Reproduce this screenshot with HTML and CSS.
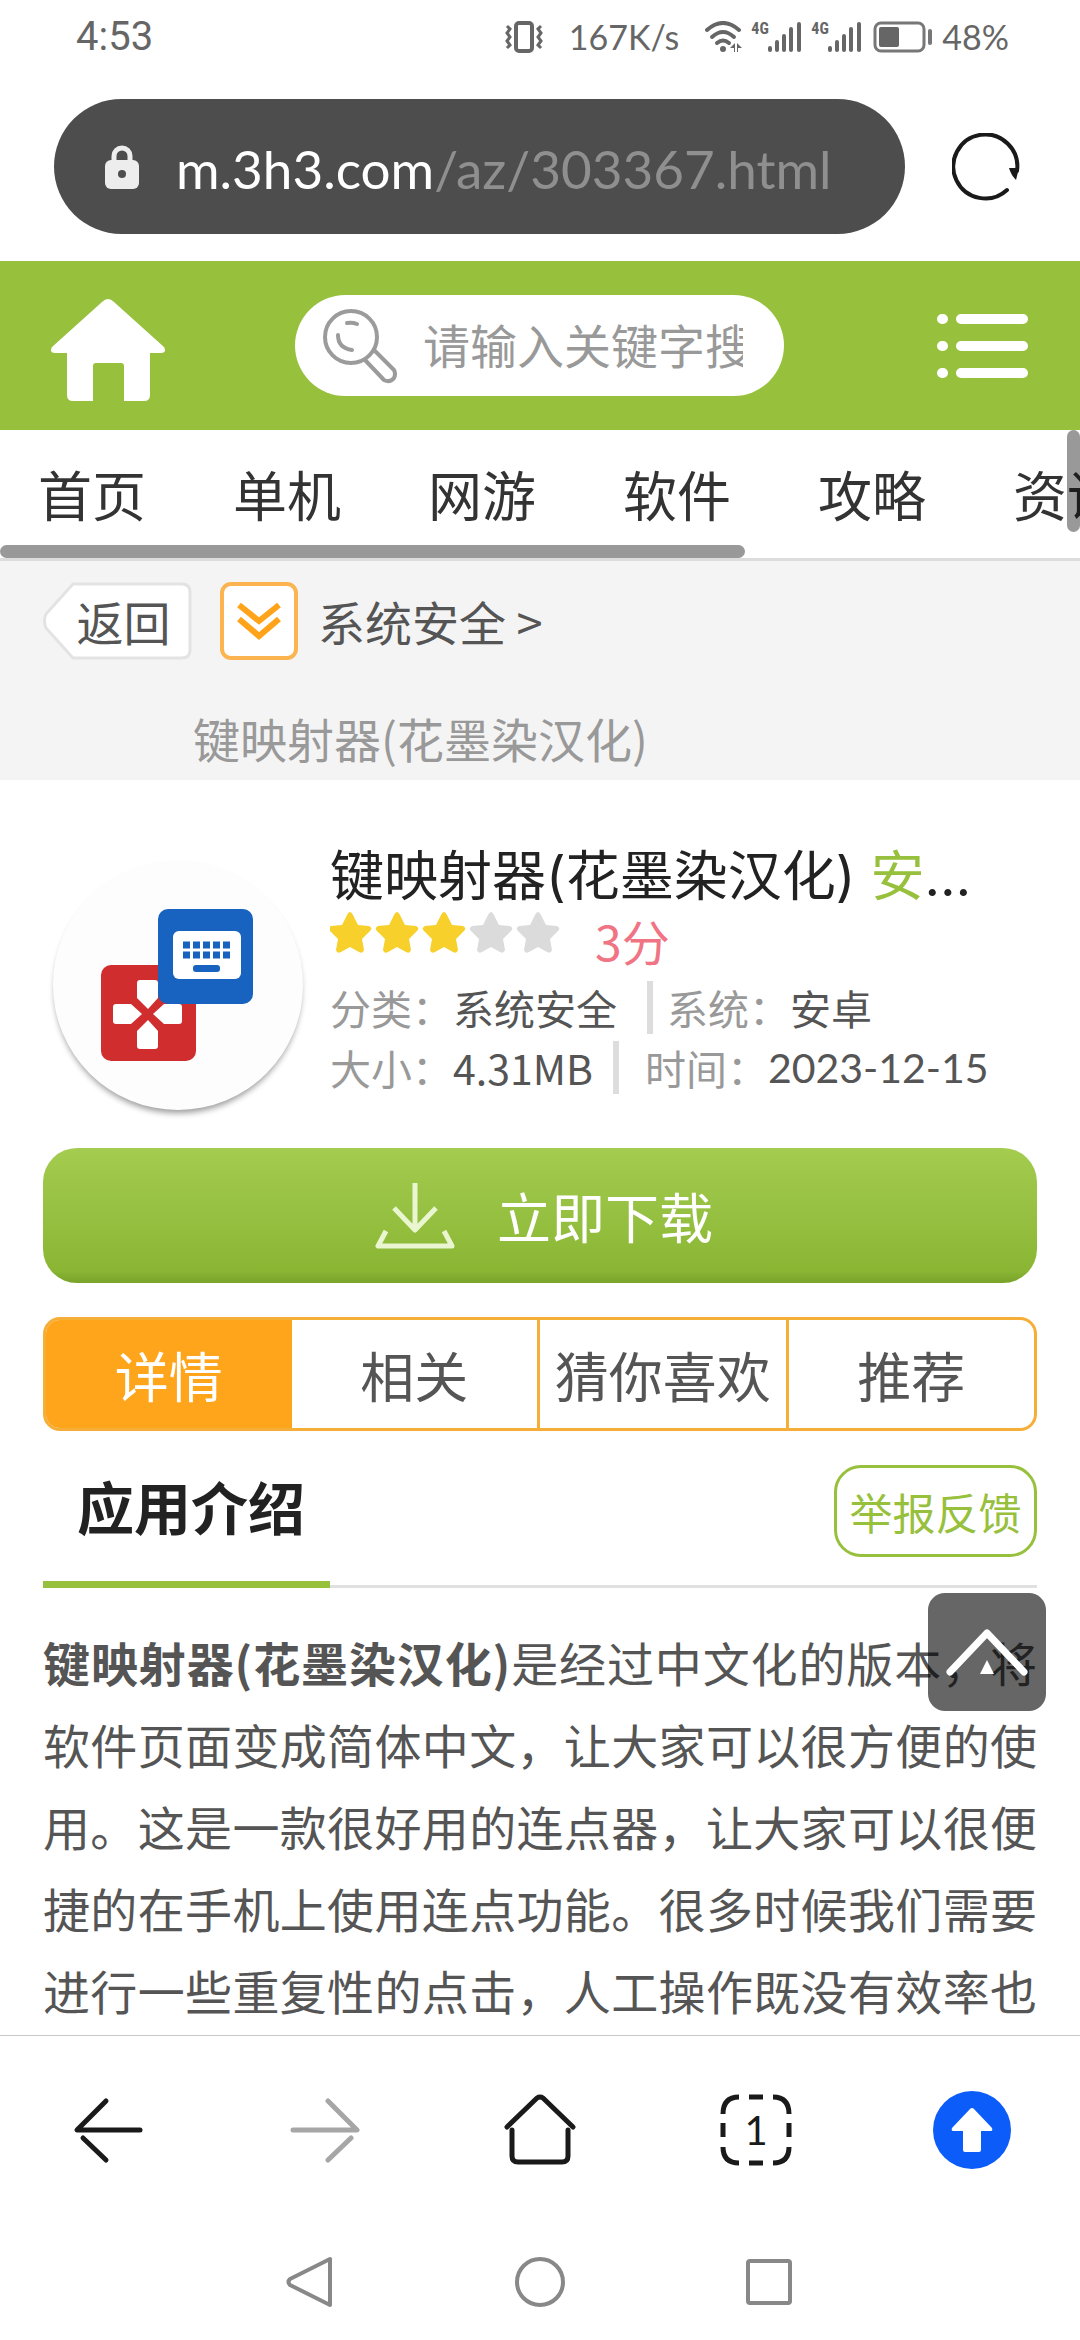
FILE: index.html
```html
<!DOCTYPE html>
<html lang="zh-CN">
<head>
<meta charset="utf-8">
<meta name="viewport" content="width=device-width, initial-scale=1">
<title>键映射器(花墨染汉化)</title>
<link rel="stylesheet" href="styles.css">
</head>
<body>
<div class="status">
  <time class="status-time">4:53</time>
  <div class="status-right">
    <svg class="vibrate" width="38" height="32" viewBox="0 0 38 32" fill="none" stroke="#666" stroke-width="4">
      <rect x="11" y="2" width="16" height="28" rx="3"/>
      <path d="M2 5l3 3-3 4 3 4-3 4 3 4-3 3M36 5l-3 3 3 4-3 4 3 4-3 4 3 3" stroke-width="3"/>
    </svg>
    <span class="speed">167K/s</span>
    <svg class="wifi" width="38" height="32" viewBox="0 0 38 32">
      <g fill="none" stroke="#666" stroke-width="4" stroke-linecap="round">
        <path d="M2 9Q18-5 34 9"/><path d="M7 16Q18 6 29 16"/><path d="M12 22Q18 17 24 22"/>
      </g>
      <circle cx="18" cy="28" r="3" fill="#666"/>
      <path d="M25 27l5-5v9h-1v-4zM32 22l5 5h-4v4h-1z" fill="#666"/>
    </svg>
    <div class="cell">
      <span class="cell-type">4G</span>
      <svg width="33" height="32" viewBox="0 0 33 32" stroke="#666" stroke-width="4" stroke-linecap="round"><path d="M2 27v2M9 21v8M16 15v14M23 8v21M31 3v26"/></svg>
    </div>
    <div class="cell">
      <span class="cell-type">4G</span>
      <svg width="33" height="32" viewBox="0 0 33 32" stroke="#666" stroke-width="4" stroke-linecap="round"><path d="M2 27v2M9 21v8M16 15v14M23 8v21M31 3v26"/></svg>
    </div>
    <svg class="battery" width="60" height="32" viewBox="0 0 60 32">
      <rect x="2" y="2" width="49" height="28" rx="6" fill="none" stroke="#777" stroke-width="3"/>
      <rect x="6" y="6" width="20" height="20" rx="2" fill="#666"/>
      <rect x="55" y="8" width="4" height="16" rx="2" fill="#777"/>
    </svg>
    <span class="percent">48%</span>
  </div>
</div>

<div class="toolbar">
  <button class="address" type="button">
    <svg width="34" height="44" viewBox="0 0 34 44">
      <rect y="15" width="34" height="29" rx="6" fill="#ededed"/>
      <path d="M9 16v-5a8 8 0 0 1 16 0v5" fill="none" stroke="#ededed" stroke-width="5"/>
      <circle cx="17" cy="29" r="4" fill="#4d4d4d"/>
    </svg>
    <span class="url">m.3h3.com<span class="url-path">/az/303367.html</span></span>
  </button>
  <button class="icon-button" type="button" aria-label="刷新">
    <svg width="68" height="68" viewBox="0 0 68 68">
      <path d="M55 57A32 32 0 1 1 65 38" fill="none" stroke="#1a1a1a" stroke-width="4" stroke-linecap="round"/>
      <path d="M57 35h10l-3 12q-5-5-7-12z" fill="#1a1a1a"/>
    </svg>
  </button>
</div>

<header class="site-header">
  <a class="site-home" href="#" aria-label="首页">
    <svg width="114" height="102" viewBox="0 0 114 102">
      <path d="M57 0q3 0 6 3l50 45q3 6-3 6H99v42q0 6-6 6H73V67q0-3-3-3H45q-3 0-3 3v35H22q-6 0-6-6V54H4q-6 0-3-6L51 3q3-3 6-3z" fill="#fff"/>
    </svg>
  </a>
  <form class="search">
    <svg width="74" height="76" viewBox="0 0 74 76" fill="none" stroke="#9b9b9b" stroke-width="4" stroke-linecap="round">
      <circle cx="28" cy="29" r="26"/>
      <path d="M24 15q5-1 10 1M15 27q0 13 14 15"/>
      <path d="M42 52l19 20q6 3 10-2 2-4 0-8L51 42"/>
    </svg>
    <input class="search-input" type="text" placeholder="请输入关键字搜索" aria-label="搜索">
  </form>
  <button class="icon-button" type="button" aria-label="菜单">
    <svg width="92" height="66" viewBox="0 0 92 66" stroke="#fff" stroke-width="10" stroke-linecap="round"><path d="M5 6h1M24 6h62M5 33h1M24 33h62M5 60h1M24 60h62"/></svg>
  </button>
</header>

<nav class="channels">
  <div class="channels-list">
    <a href="#">首页</a><a href="#">单机</a><a href="#">网游</a><a href="#">软件</a><a href="#">攻略</a><a href="#">资讯</a>
  </div>
  <div class="channels-bar"></div>
  <div class="page-scroll"></div>
</nav>

<main class="page">
  <div class="crumbs">
    <div class="crumbs-row">
      <a class="back" href="#">
        <svg class="back-shape" width="149" height="78" viewBox="0 0 149 78"><path d="M30 2h109q8 0 8 8v58q0 8-8 8H30L3 46q-3-7 0-14z" fill="#fff" stroke="#e3e3e3" stroke-width="3"/></svg>
        <span class="back-text">返回</span>
      </a>
      <button class="icon-button" type="button" aria-label="展开">
        <svg width="78" height="78" viewBox="0 0 78 78" fill="none">
          <rect x="2" y="2" width="74" height="74" rx="9" fill="#fff" stroke="#fbb450" stroke-width="4"/>
          <path d="M19 23l20 16 20-16M19 37l20 17 20-17" stroke="#ffa31a" stroke-width="6"/>
        </svg>
      </button>
      <a class="crumb-link" href="#">系统安全 &gt;</a>
    </div>
    <p class="crumb-current">键映射器(花墨染汉化)</p>
  </div>

  <section class="app">
    <svg class="app-icon" width="270" height="282" viewBox="0 0 270 282">
      <defs><filter id="shade" x="-10%" y="-10%" width="120%" height="120%"><feGaussianBlur stdDeviation="3"/></filter></defs>
      <circle cx="135" cy="148" r="123" fill="#000" opacity=".4" filter="url(#shade)"/>
      <circle cx="135" cy="143" r="125" fill="#fdfdfd"/>
      <rect x="58" y="123" width="95" height="96" rx="10" fill="#d02d2e"/>
      <g fill="#fff">
        <path d="M94 141q0-3 3-3h15q3 0 3 3v15l-10 11-11-11z"/>
        <path d="M94 204q0 3 3 3h15q3 0 3-3v-15l-10-11-11 11z"/>
        <path d="M73 162q-3 0-3 3v14q0 3 3 3h15l11-10-11-10z"/>
        <path d="M136 162q3 0 3 3v14q0 3-3 3h-15l-11-10 11-10z"/>
      </g>
      <rect x="115" y="67" width="95" height="95" rx="10" fill="#1763bf"/>
      <rect x="130" y="89" width="68" height="48" rx="6" fill="#fff"/>
      <path d="M140 103h49M140 113h49" stroke="#1763bf" stroke-width="7" stroke-dasharray="7 3"/>
      <rect x="150" y="123" width="27" height="7" rx="3" fill="#1763bf"/>
    </svg>
    <div class="app-info">
      <h1 class="app-title">键映射器(花墨染汉化) <span class="app-platform">安卓版</span></h1>
      <div class="rating">
        <svg width="230" height="41" viewBox="0 0 230 41">
          <defs><path id="star" d="M17 3q3-6 6 0l5 10 11 1q4 2 1 5l-8 8 2 11q-1 4-5 2l-9-5-9 5q-4 2-5-2l2-11-8-8q-3-3 1-5l11-1z"/></defs>
          <g fill="#f7d02b"><use href="#star"/><use href="#star" x="47"/><use href="#star" x="94"/></g>
          <g fill="#dbdbdb"><use href="#star" x="141"/><use href="#star" x="188"/></g>
        </svg>
        <span class="score">3分</span>
      </div>
      <div class="meta">
        <span class="label">分类：</span><span class="value">系统安全</span>
        <span class="label label-next">系统：</span><span class="value">安卓</span>
      </div>
      <div class="meta meta-wide">
        <span class="label">大小：</span><span class="value">4.31MB</span>
        <span class="label label-next">时间：</span><span class="value date">2023-12-15</span>
      </div>
    </div>
  </section>

  <a class="download" href="#">
    <svg width="80" height="66" viewBox="0 0 80 66" fill="none" stroke="#e9f6cf" stroke-width="5" stroke-linejoin="round">
      <path d="M40 0v45M19 25l21 22 21-22M11 48L3 63h74l-8-15"/>
    </svg>
    <span>立即下载</span>
  </a>

  <div class="tabs">
    <button class="tab tab-active" type="button">详情</button>
    <button class="tab" type="button">相关</button>
    <button class="tab" type="button">猜你喜欢</button>
    <button class="tab" type="button">推荐</button>
  </div>

  <div class="section-head">
    <h2 class="section-title">应用介绍</h2>
    <button class="report" type="button">举报反馈</button>
  </div>

  <p class="article"><strong>键映射器(花墨染汉化)</strong>是经过中文化的版本，将软件页面变成简体中文，让大家可以很方便的使用。这是一款很好用的连点器，让大家可以很便捷的在手机上使用连点功能。很多时候我们需要进行一些重复性的点击，人工操作既没有效率也</p>
</main>

<button class="to-top" type="button" aria-label="返回顶部">
  <svg width="84" height="60" viewBox="0 0 84 60"><path d="M5 50L42 11l37 39" fill="none" stroke="#fff" stroke-width="7" stroke-linecap="round" stroke-linejoin="round"/><path d="M42 38l7 14H35z" fill="#fff"/></svg>
</button>

<nav class="browser-nav">
  <button class="icon-button" type="button" aria-label="后退">
    <svg width="72" height="72" viewBox="0 0 72 72" fill="none" stroke="#1a1a1a" stroke-width="5" stroke-linecap="round" stroke-linejoin="round"><path d="M34 7L5 36h63M11 44l23 22"/></svg>
  </button>
  <button class="icon-button" type="button" aria-label="前进">
    <svg width="72" height="72" viewBox="0 0 72 72" fill="none" stroke="#a6a6a6" stroke-width="5" stroke-linecap="round" stroke-linejoin="round"><path d="M40 7l29 29H5M63 44L40 66"/></svg>
  </button>
  <button class="icon-button" type="button" aria-label="主页">
    <svg width="72" height="72" viewBox="0 0 72 72" fill="none" stroke="#1a1a1a" stroke-width="5" stroke-linecap="round" stroke-linejoin="round"><path d="M3 33L33 4q3-2 6 0l30 29M8 36v26q0 6 6 6h44q6 0 6-6V36"/></svg>
  </button>
  <button class="icon-button tab-count" type="button" aria-label="标签页">
    <svg width="72" height="72" viewBox="0 0 72 72" fill="none" stroke="#1a1a1a" stroke-width="5"><path d="M19 3Q3 3 3 20M53 3q16 0 16 17M19 69Q3 69 3 53M53 69q16 0 16-16M29 3h14M29 69h14M3 29v14M69 29v14"/></svg>
    <span class="tab-number">1</span>
  </button>
  <button class="icon-button" type="button" aria-label="上传">
    <svg width="78" height="78" viewBox="0 0 78 78"><circle cx="39" cy="39" r="39" fill="#0b5cf8"/><path d="M39 17q1 0 2 1l18 19q1 3-1 3H48v19q0 2-2 2H32q-2 0-2-2V40H20q-2 0-1-3l18-19q1-1 2-1z" fill="#fff"/></svg>
  </button>
</nav>

<nav class="system-nav">
  <button class="icon-button" type="button" aria-label="返回">
    <svg width="52" height="52" viewBox="0 0 52 52" fill="none" stroke="#888" stroke-width="4" stroke-linejoin="round"><path d="M45 3v46L5 29q-3-3 0-6z"/></svg>
  </button>
  <button class="icon-button" type="button" aria-label="桌面">
    <svg width="52" height="52" viewBox="0 0 52 52" fill="none" stroke="#888" stroke-width="4"><circle cx="26" cy="26" r="23"/></svg>
  </button>
  <button class="icon-button" type="button" aria-label="最近任务">
    <svg width="52" height="52" viewBox="0 0 52 52" fill="none" stroke="#888" stroke-width="4"><rect x="5" y="5" width="42" height="42" rx="2"/></svg>
  </button>
</nav>
</body>
</html>
```

FILE: styles.css
```css
* { box-sizing: border-box; }

body {
  margin: 0;
  height: 100vh;
  display: flex;
  flex-direction: column;
  background: #fff;
  color: #555;
  font-family: "Noto Sans CJK SC", "Noto Sans", sans-serif;
  font-size: 47px;
}

a { color: inherit; text-decoration: none; }
p, h1, h2 { margin: 0; font-weight: 400; }
svg { display: block; flex: none; }
button { margin: 0; padding: 0; border: 0; background: none; font: inherit; color: inherit; }
.icon-button { display: grid; place-items: center; flex: none; }

/* Phone status bar */
.status {
  flex: none;
  height: 74px;
  padding: 0 71px 0 76px;
  display: flex;
  align-items: center;
  justify-content: space-between;
  color: #666;
  line-height: 74px;
  font-family: Lato, sans-serif;
}
.status-time { font-size: 40px; font-family: Roboto, sans-serif; }
.status-right { display: flex; align-items: center; font-size: 34px; }
.speed { margin: 0 26px; }
.cell { display: flex; align-items: flex-start; margin-left: 10px; }
.wifi + .cell { margin-left: 8px; }
.cell-type { width: 17px; font: 700 16px/16px "Liberation Sans Narrow", "Roboto Condensed", Roboto, sans-serif; }
.battery { margin: 0 9px 0 12px; }

/* Browser address bar */
.toolbar { flex: none; display: flex; align-items: center; gap: 47px; padding: 25px 60px 27px 54px; }
.address {
  flex: 1;
  height: 135px;
  padding-left: 51px;
  display: flex;
  align-items: center;
  gap: 37px;
  border-radius: 68px;
  background: #4d4d4d;
  color: #fff;
  font-family: Lato, sans-serif;
  font-size: 53px;
}
.url { padding-top: 4px; }
.url-path { color: #8f8f8f; }

/* Site header */
.site-header { flex: none; display: flex; align-items: center; height: 169px; padding: 0 51px; background: #97c03d; }
.site-home { padding-top: 8px; }
.search {
  flex: 1;
  min-width: 0;
  height: 101px;
  margin: 0 153px 0 130px;
  padding: 0 41px 0 28px;
  display: flex;
  align-items: center;
  gap: 26px;
  border-radius: 51px;
  background: #fff;
}
.search-input { flex: 1; min-width: 0; height: 70px; padding: 0 0 4px; border: 0; outline: 0; background: none; font: inherit; color: #555; }
.search-input::placeholder { color: #999; opacity: 1; }

/* Channel strip */
.channels { flex: none; position: relative; border-bottom: 3px solid #ddd; overflow: hidden; }
.channels-list { display: flex; gap: 87px; padding-left: 38px; height: 115px; line-height: 128px; font-size: 54px; color: #333; white-space: nowrap; }
.channels-bar { width: 69%; height: 13px; border-radius: 7px; background: #999; }
.page-scroll { position: absolute; top: 0; right: 0; width: 13px; height: 102px; border-radius: 7px; background: rgba(0, 0, 0, .4); }

.page { flex: 1; min-height: 0; overflow: hidden; }

/* Breadcrumbs */
.crumbs { background: #f4f4f4; height: 219px; padding: 21px 43px 0; }
.crumbs-row { display: flex; align-items: center; }
.back { display: grid; place-items: center; margin-right: 28px; }
.back-shape, .back-text { grid-area: 1 / 1; }
.back-text { padding-left: 12px; line-height: 70px; }
.crumb-link { margin-left: 20px; line-height: 70px; }
.crumb-current { padding-left: 150px; margin-top: 43px; line-height: 70px; color: #999; }

/* App summary */
.app { display: flex; gap: 17px; padding: 62px 43px 0; }
.app-info { flex: 1; min-width: 0; }
.app-title {
  margin-right: 45px;
  overflow: hidden;
  white-space: nowrap;
  text-overflow: ellipsis;
  font-family: Inter, "Noto Sans CJK SC", sans-serif;
  font-size: 54px;
  line-height: 70px;
  color: #222;
}
.app-platform { color: #97c03d; }
.rating { display: flex; align-items: flex-start; gap: 35px; height: 65px; }
.score { font-size: 48px; line-height: 56px; color: #f07484; }
.meta { display: flex; align-items: center; height: 60px; font-size: 41px; line-height: 53px; }
.label { color: #999; }
.label-next { margin-left: 30px; padding-left: 14px; border-left: 6px solid #ddd; }
.meta-wide .label-next { margin-left: 20px; padding-left: 26px; }
.date { font-family: Lato, sans-serif; }

/* Download button */
.download {
  margin: 24px 43px 34px;
  padding-left: 8px;
  height: 135px;
  display: flex;
  align-items: center;
  justify-content: center;
  gap: 42px;
  border-radius: 34px;
  background: linear-gradient(#a4cc50, #8ab634 91%, #7ba62b 98%);
  color: #fff;
  font-size: 54px;
}

/* Section tabs */
.tabs { display: flex; height: 114px; margin: 0 43px; border: 3px solid #f5ae38; border-radius: 17px; overflow: hidden; }
.tab { flex: 1 1 0; font-size: 54px; white-space: nowrap; }
.tab + .tab + .tab { border-left: 3px solid #f5ae38; }
.tab-active { background: #ffa51c; color: #fff; }

/* Introduction */
.section-head { display: flex; justify-content: space-between; align-items: flex-start; margin: 0 43px; border-bottom: 3px solid #e0e0e0; }
.section-title {
  margin-bottom: -3px;
  padding: 0 25px 2px 34px;
  border-bottom: 7px solid #97c03d;
  color: #222;
  font-size: 57px;
  font-weight: 700;
  line-height: 148px;
}
.report { margin-top: 34px; width: 203px; height: 92px; border: 3px solid #97c03d; border-radius: 27px; color: #97c03d; font-size: 43px; line-height: 86px; }
.article { margin: 33px 43px 0; line-height: 82px; text-align: justify; text-align-last: justify; }

.to-top {
  position: fixed;
  right: 34px;
  bottom: 629px;
  width: 118px;
  height: 118px;
  display: grid;
  place-items: center;
  border-radius: 17px;
  background: rgba(0, 0, 0, .6);
}

/* Browser and phone navigation */
.browser-nav { flex: none; display: grid; grid-template-columns: repeat(5, 1fr); height: 189px; border-top: 1px solid #c8c8c8; background: #fff; }
.tab-count svg, .tab-number { grid-area: 1 / 1; }
.tab-number { color: #1a1a1a; font-family: Lato, sans-serif; font-size: 40px; line-height: 72px; }
.system-nav { flex: none; display: grid; grid-template-columns: repeat(3, 229px); justify-content: center; height: 116px; }
```
